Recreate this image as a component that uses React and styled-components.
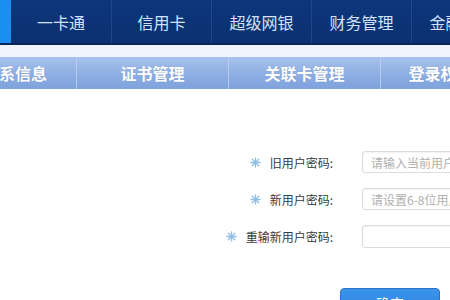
import React from "react";
import styled, { createGlobalStyle } from "styled-components";

const Global = createGlobalStyle`
  html, body { margin: 0; padding: 0; background: #fff; overflow: hidden; }
  body { font-family: "Microsoft YaHei", "Noto Sans CJK SC", "Noto Sans", sans-serif; }
`;

const Page = styled.div`
  width: 450px;
  height: 300px;
  overflow: hidden;
  background: #fff;
`;

const TopBar = styled.div`
  display: flex;
  height: 43px;
  background: linear-gradient(#0d377c, #0a306f);
  border-bottom: 2px solid #072559;
  white-space: nowrap;
`;

const Strip = styled.div`
  flex: none;
  width: 11px;
  background: #1b8ef2;
`;

const NavItem = styled.div`
  flex: none;
  width: ${(p) => p.$w || 100}px;
  display: flex;
  align-items: center;
  justify-content: center;
  color: #d3e2f8;
  font-size: 16px;
  border-left: ${(p) => (p.$first ? "none" : "1px solid #1e4689")};
  box-sizing: border-box;
`;

const Gap = styled.div`
  height: 12px;
  background: #eef4fb;
`;

const SubBar = styled.div`
  display: flex;
  height: 32px;
  margin-left: -17px;
  background: linear-gradient(#a7c1ec, #8cade2 60%, #7fa2dd);
  white-space: nowrap;
`;

const SubItem = styled.div`
  flex: none;
  width: ${(p) => p.$w}px;
  display: flex;
  align-items: center;
  justify-content: ${(p) => (p.$left ? "flex-start" : "center")};
  color: #fff;
  font-size: 16px;
  font-weight: bold;
  text-shadow: 0 0 1px rgba(60, 90, 150, 0.4);
  border-left: ${(p) => (p.$first ? "none" : "1px solid #b7cbee")};
  box-sizing: border-box;
`;

const Form = styled.div`
  display: grid;
  grid-template-columns: 333px 150px;
  column-gap: 29px;
  row-gap: 15px;
  margin-top: 62px;
  align-items: center;
`;

const Label = styled.div`
  display: flex;
  align-items: center;
  justify-content: flex-end;
  gap: 9px;
  font-size: 12px;
  color: #3a3a3a;
  height: 22px;
  white-space: nowrap;
`;

const Input = styled.input`
  box-sizing: border-box;
  height: ${(p) => p.$h || 22}px;
  width: 150px;
  border: 1px solid #d9dde2;
  border-radius: 3px;
  box-shadow: inset 0 1px 2px rgba(0, 0, 0, 0.06);
  padding: 0 8px;
  font-size: 12px;
  font-family: inherit;
  outline: none;
  &::placeholder { color: #b0b0b0; }
`;

const ButtonRow = styled.div`
  padding-left: 340px;
  margin-top: 40px;
`;

const Button = styled.button`
  width: 100px;
  height: 30px;
  border: 1px solid #2a73c8;
  border-radius: 4px;
  background: linear-gradient(#3b93ea, #2c82dc);
  color: #fff;
  font-size: 14px;
  font-family: inherit;
  padding: 0;
`;

const Star = () => (
  <svg width="11" height="11" viewBox="0 0 12 12" fill="none" stroke="#8fbde6" strokeWidth="1.4" strokeLinecap="round">
    <line x1="6" y1="1" x2="6" y2="11" />
    <line x1="1" y1="6" x2="11" y2="6" />
    <line x1="2.5" y1="2.5" x2="9.5" y2="9.5" />
    <line x1="9.5" y1="2.5" x2="2.5" y2="9.5" />
  </svg>
);

const nav = ["一卡通", "信用卡", "超级网银", "财务管理", "金融服务"];
const sub = ["证书管理", "关联卡管理", "登录权限管理"];

export default function App() {
  return (
    <Page>
      <Global />
      <TopBar>
        <Strip />
        {nav.map((t, i) => (
          <NavItem key={t} $first={i === 0}>{t}</NavItem>
        ))}
      </TopBar>
      <Gap />
      <SubBar>
        <SubItem $w={93} $left $first>联系信息</SubItem>
        {sub.map((t) => (
          <SubItem key={t} $w={152}>{t}</SubItem>
        ))}
      </SubBar>
      <Form>
        <Label><Star />旧用户密码:</Label>
        <Input placeholder="请输入当前用户密码" />
        <Label><Star />新用户密码:</Label>
        <Input placeholder="请设置6-8位用户密码" />
        <Label><Star />重输新用户密码:</Label>
        <Input $h={23} />
      </Form>
      <ButtonRow>
        <Button>确定</Button>
      </ButtonRow>
    </Page>
  );
}
